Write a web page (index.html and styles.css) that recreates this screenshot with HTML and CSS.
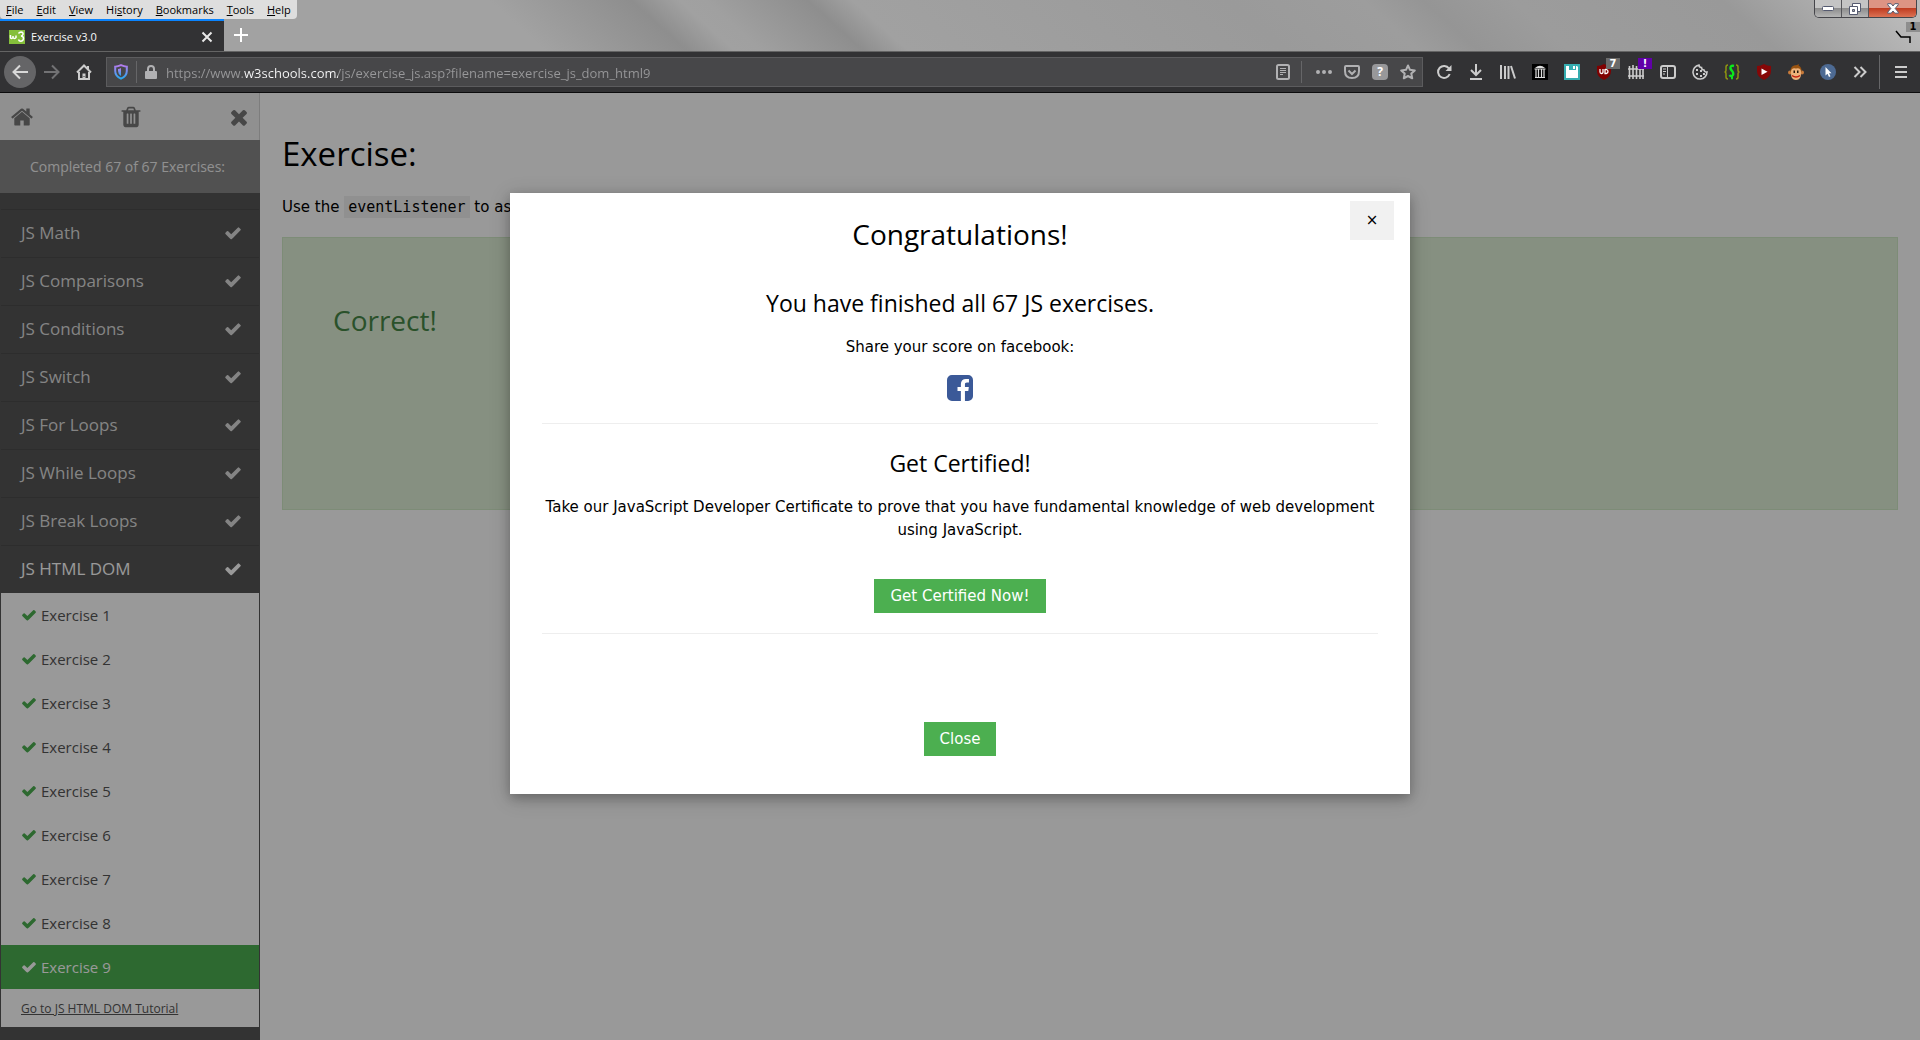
FILE: index.html
```html
<!DOCTYPE html>
<html lang="en">
<head>
<meta charset="utf-8">
<title>Exercise v3.0</title>
<link rel="stylesheet" href="styles.css">
</head>
<body>
<svg class="sprite" aria-hidden="true">
  <symbol id="check" viewBox="0 0 1792 1792"><path d="M1671 566q0 40-28 68l-724 724-136 136q-28 28-68 28t-68-28l-136-136-362-362q-28-28-28-68t28-68l136-136q28-28 68-28t68 28l294 295 656-657q28-28 68-28t68 28l136 136q28 28 28 68z"/></symbol>
</svg>

<header class="chrome">
  <div class="titlebar">
    <div class="title-left">
      <nav class="menubar" aria-label="Application menu">
        <button><u>F</u>ile</button>
        <button><u>E</u>dit</button>
        <button><u>V</u>iew</button>
        <button>Hi<u>s</u>tory</button>
        <button><u>B</u>ookmarks</button>
        <button><u>T</u>ools</button>
        <button><u>H</u>elp</button>
      </nav>
      <div class="tabs">
        <div class="tab">
          <svg width="16" height="14" viewBox="0 0 16 14"><rect width="16" height="14" fill="#85bf3b"/><path d="M1.500 5v2.500q0 1 1 1t1.500-1V6v1.500q.5 1 1.500 1t1.500-1V5.500M9.500 3.500q1-1.500 2.500-1.500 2.500.3 2 2.300-.3 1.500-2 1.700 2.500.3 2.500 2.500-.3 2.700-2.800 2.700-1.700 0-2.200-1.700" fill="none" stroke="#fff" stroke-width="1.500"/></svg>
          <span class="tab-title">Exercise v3.0</span>
          <button class="tab-close" aria-label="Close tab"><svg width="12" height="12" viewBox="0 0 12 12"><path d="M1.500 1.500l9 9m0-9l-9 9" stroke="#e8e8e8" stroke-width="2"/></svg></button>
        </div>
        <button class="new-tab" aria-label="New tab"><svg width="14" height="14" viewBox="0 0 14 14"><path d="M7 0v14M0 7h14" stroke="#fff" stroke-width="2"/></svg></button>
      </div>
    </div>
    <div class="title-right">
      <div class="window-controls">
        <button class="wc wc-min" aria-label="Minimize"><svg width="12" height="6" viewBox="0 0 12 6"><rect x=".5" y=".5" width="11" height="4" rx="1" fill="#fff" stroke="#555a70"/></svg></button>
        <button class="wc wc-max" aria-label="Restore"><svg width="12" height="12" viewBox="0 0 12 12"><path d="M3.500.5h8v8h-8z" fill="#fff" stroke="#555a70"/><path d="M.5 3.500h8v8h-8z" fill="#fff" stroke="#555a70"/><path d="M3.500 6.500h2v2h-2z" fill="#aaa" stroke="#555a70"/></svg></button>
        <button class="wc wc-close" aria-label="Close window"><svg width="12" height="11" viewBox="0 0 12 11"><path d="M.7.700h3.500L6 3 7.800.7h3.500v1L8.200 5.500l3.100 3.700v1H7.800L6 8l-1.800 2.200H.7v-1l3.100-3.700L.7 1.700z" fill="#fff" stroke="#555a70"/></svg></button>
      </div>
      <button class="all-tabs" aria-label="List all tabs"><svg width="16" height="14" viewBox="0 0 16 14"><path d="M1 1l5 6h9v6" fill="none" stroke="#000" stroke-width="1.500"/></svg><span class="tab-count">1</span></button>
    </div>
  </div>

  <div class="toolbar">
    <button class="tool back" aria-label="Back"><svg width="16" height="16" viewBox="0 0 16 16"><path d="M16 8H1.500M8 1.500L1.500 8 8 14.500" fill="none" stroke="#d8d8d8" stroke-width="2"/></svg></button>
    <button class="tool" aria-label="Forward"><svg width="16" height="16" viewBox="0 0 16 16"><path d="M0 8h14.500M8 1.500L14.500 8 8 14.500" fill="none" stroke="#727274" stroke-width="2"/></svg></button>
    <button class="tool" aria-label="Home"><svg width="16" height="16" viewBox="0 0 16 16"><path d="M1 8.500l7-7 7 7M3 8v7h10V8M12 5V2" fill="none" stroke="#ccc" stroke-width="2"/><path d="M6.500 15V9.500h3V15" fill="#ccc"/><path d="M8 12v1" stroke="#323234"/></svg></button>

    <div class="urlbar">
      <svg width="14" height="16" viewBox="0 0 14 16"><defs><linearGradient id="shield" x1="0" y1="0" x2="0" y2="1"><stop stop-color="#b57bee"/><stop offset="1" stop-color="#28a8ee"/></linearGradient></defs><path d="M7 1.200q3 1.300 5.800 1.500v4.300q0 5-5.800 7.700-5.800-2.700-5.800-7.700V2.700Q4 2.500 7 1.200z" fill="none" stroke="url(#shield)" stroke-width="2"/><path d="M7 4v8Q4 10 4 7V5q1.500-.2 3-1z" fill="url(#shield)"/></svg>
      <span class="rule"></span>
      <svg width="12" height="14" viewBox="0 0 12 14"><path d="M3 7V4q0-3 3-3t3 3v3" fill="none" stroke="#b1b1b3" stroke-width="2"/><rect y="6" width="12" height="8" rx="1" fill="#b1b1b3"/></svg>
      <input class="url" type="text" aria-label="Address" value="https://www.w3schools.com/js/exercise_js.asp?filename=exercise_js_dom_html9">
      <button class="page-act" aria-label="Reader view"><svg width="14" height="16" viewBox="0 0 14 16"><rect x="1" y="1" width="12" height="14" rx="1.500" fill="none" stroke="#b1b1b3" stroke-width="2"/><path d="M4 4.500h6M4 6.500h6M4 8.500h6M4 10.500h3" stroke="#b1b1b3"/></svg></button>
      <span class="rule actions-rule"></span>
      <button class="page-act" aria-label="Page actions"><svg width="16" height="4" viewBox="0 0 16 4"><path d="M2 0a2 2 0 100 4 2 2 0 000-4zm6 0a2 2 0 100 4 2 2 0 000-4zm6 0a2 2 0 100 4 2 2 0 000-4z" fill="#b1b1b3"/></svg></button>
      <button class="page-act" aria-label="Save to Pocket"><svg width="16" height="14" viewBox="0 0 16 14"><path d="M2 1h12q1 0 1 1v4q0 7-7 7T1 6V2q0-1 1-1z" fill="none" stroke="#b1b1b3" stroke-width="2"/><path d="M4.500 5.500L8 9l3.500-3.500" fill="none" stroke="#b1b1b3" stroke-width="2"/></svg></button>
      <button class="page-act help" aria-label="Site help">?</button>
      <button class="page-act" aria-label="Bookmark this page"><svg width="16" height="16" viewBox="0 0 16 16"><path d="M8 1.500l2 4.300 4.800.6-3.500 3.200.9 4.700L8 12l-4.200 2.300.9-4.700L1.200 6.400 6 5.800z" fill="none" stroke="#b1b1b3" stroke-width="2" stroke-linejoin="round"/></svg></button>
    </div>

    <div class="extensions">
      <button class="tool" aria-label="Reload"><svg width="16" height="16" viewBox="0 0 16 16"><path d="M13 4.500A6 6 0 1013.700 10" fill="none" stroke="#ccc" stroke-width="2"/><path d="M15.500 1v6h-6z" fill="#ccc"/></svg></button>
      <button class="tool" aria-label="Downloads"><svg width="14" height="16" viewBox="0 0 14 16"><path d="M7 0v11M2 6l5 5 5-5M1 15h12" fill="none" stroke="#ccc" stroke-width="2"/></svg></button>
      <button class="tool" aria-label="Library"><svg width="16" height="14" viewBox="0 0 16 14"><path d="M1 0v14M5 1v13M8.500 1v13M11 1l4 12.500" fill="none" stroke="#ccc" stroke-width="2"/></svg></button>
      <button class="tool" aria-label="Internet Archive"><svg width="16" height="16" viewBox="0 0 16 16"><path d="M0 0h16v16H0z" fill="#000"/><path d="M3 4q5-4.500 10 0z" fill="#ddd"/><path d="M2.500 5h11M3 13.500h10M4 5v8M6.500 5v8M9.500 5v8M12 5v8" stroke="#ddd" stroke-width="1.200"/></svg></button>
      <button class="tool" aria-label="Save page"><svg width="16" height="16" viewBox="0 0 16 16"><path d="M0 0h16v16H0z" fill="#35adb0"/><path d="M2 2h3v4h7V2h1l1 1v11H2z" fill="#fff"/><path d="M9 2h2v3H9z" fill="#fff"/></svg></button>
      <button class="tool" aria-label="uBlock Origin"><svg width="16" height="16" viewBox="0 0 16 16"><path d="M8 0q3 2 7 2v5q0 6-7 9-7-3-7-9V2q4 0 7-2z" fill="#800000"/><path d="M4 5v3q0 1.500 1.500 1.500T7 8V5M9 5v4.500h1.500Q12 9 12 7.500T10.500 5.500H9" fill="none" stroke="#fff" stroke-width="1.300"/></svg><span class="badge">7</span></button>
      <button class="tool" aria-label="Request blocker"><svg width="16" height="16" viewBox="0 0 16 16"><path d="M1.500 2v13M5 1v14M8.500 2v13M12 1v14M15 2v13M0 5h16M0 12h16" stroke="#ccc" stroke-width="1.600"/></svg><span class="badge alert">!</span></button>
      <button class="tool" aria-label="Sidebars"><svg width="16" height="14" viewBox="0 0 16 14"><rect x="1" y="1" width="14" height="12" rx="2" fill="none" stroke="#ccc" stroke-width="2"/><path d="M7.500 1v12M3 4h3M3 6.500h3M3 9h2" stroke="#ccc"/></svg></button>
      <button class="tool" aria-label="Cookies"><svg width="16" height="16" viewBox="0 0 16 16"><path d="M7 1.100A7 7 0 1015 8q-2.500.5-3-2-2.500 0-2.500-2.500Q7 3.500 7 1.100z" fill="none" stroke="#ccc" stroke-width="1.600"/><path d="M4 5h2v2H4zM8 6h2v2H8zM4 9h2v2H4zM8 11h2v2H8zM11 9h2v2h-2z" fill="#ccc"/></svg></button>
      <button class="tool" aria-label="User styles"><svg width="16" height="16" viewBox="0 0 16 16"><path d="M4 1Q2 1 2 3v3q0 2-1.500 2Q2 8 2 10v3q0 2 2 2M12 1q2 0 2 2v3q0 2 1.500 2Q14 8 14 10v3q0 2-2 2" fill="none" stroke="#8f9410" stroke-width="1.500"/><path d="M10 2Q6 1 6.500 4.500q.5 1.500 2 3Q10 10 8.500 11.500q-1.500 1.500-3-.5M7 14h2" fill="none" stroke="#0bea1c" stroke-width="2.400"/></svg></button>
      <button class="tool" aria-label="Video blocker"><svg width="16" height="16" viewBox="0 0 16 16"><path d="M8 0q3 2 7 2v5q0 6-7 9-7-3-7-9V2q4 0 7-2z" fill="#860707"/><path d="M5.500 4.500v6.500l6-3.200z" fill="#fff"/></svg></button>
      <button class="tool" aria-label="Greasemonkey"><svg width="16" height="16" viewBox="0 0 16 16"><circle cx="2" cy="8.500" r="2" fill="#c87a3a"/><circle cx="14" cy="8.500" r="2" fill="#c87a3a"/><path d="M2.500 8Q2 1 9 1l2-1-.5 1.500Q14 3 13.500 8z" fill="#9a5310"/><path d="M8 4.500q5-1 5 3.500.5 8-5 8t-5-8q0-4.500 5-3.500z" fill="#eeb37b"/><path d="M5.500 6.500h1.500v2.500H5.500zM9 6.500h1.500v2.500H9z" fill="#26180a"/><path d="M4 11.500q4 3 8 0" fill="none" stroke="#c42010" stroke-width="1.500"/></svg></button>
      <button class="tool" aria-label="Pointer tools"><svg width="16" height="16" viewBox="0 0 16 16"><circle cx="8" cy="8" r="8" fill="#4d6a93"/><path d="M5.500 3v8.500l2-1.700 1.500 3.200 1.500-.7L9 9.300h2.500z" fill="#fff"/></svg></button>
      <button class="tool" aria-label="More tools"><svg width="14" height="12" viewBox="0 0 14 12"><path d="M1.500 1l5 5-5 5M7.500 1l5 5-5 5" fill="none" stroke="#ccc" stroke-width="2"/></svg></button>
    </div>
    <span class="rule tall"></span>
    <button class="tool" aria-label="Open menu"><svg width="12" height="12" viewBox="0 0 12 12"><path d="M0 1h12M0 6h12M0 11h12" stroke="#ccc" stroke-width="2"/></svg></button>
  </div>
</header>

<div class="viewport">
  <aside class="sidebar">
    <div class="side-tools">
      <a href="#home" aria-label="Home"><svg width="24" height="24" viewBox="0 0 1792 1792"><path d="M1472 992v480q0 26-19 45t-45 19h-384v-384h-256v384h-384q-26 0-45-19t-19-45v-480q0-1 .5-3t.5-3l575-474 575 474q1 2 1 6zm223-69l-62 74q-8 9-21 11h-3q-13 0-21-7l-692-577-692 577q-12 8-24 7-13-2-21-11l-62-74q-8-10-7-23.500t11-21.500l719-599q32-26 76-26t76 26l244 204v-195q0-14 9-23t23-9h192q14 0 23 9t9 23v408l219 182q10 8 11 21.500t-7 23.500z"/></svg></a>
      <button aria-label="Reset score"><svg width="24" height="24" viewBox="0 0 1792 1792"><path d="M704 1376v-704q0-14-9-23t-23-9h-64q-14 0-23 9t-9 23v704q0 14 9 23t23 9h64q14 0 23-9t9-23zm256 0v-704q0-14-9-23t-23-9h-64q-14 0-23 9t-9 23v704q0 14 9 23t23 9h64q14 0 23-9t9-23zm256 0v-704q0-14-9-23t-23-9h-64q-14 0-23 9t-9 23v704q0 14 9 23t23 9h64q14 0 23-9t9-23zm-544-992h448l-48-117q-7-9-17-11h-317q-10 2-17 11zm928 32v64q0 14-9 23t-23 9h-96v948q0 83-47 143.500t-113 60.500h-832q-66 0-113-58.500t-47-141.500v-952h-96q-14 0-23-9t-9-23v-64q0-14 9-23t23-9h309l70-167q15-37 54-63t79-26h320q40 0 79 26t54 63l70 167h309q14 0 23 9t9 23z"/></svg></button>
      <button aria-label="Close menu"><svg width="24" height="24" viewBox="0 0 1792 1792"><path d="M1490 1322q0 40-28 68l-136 136q-28 28-68 28t-68-28l-294-294-294 294q-28 28-68 28t-68-28l-136-136q-28-28-28-68t28-68l294-294-294-294q-28-28-28-68t28-68l136-136q28-28 68-28t68 28l294 294 294-294q28-28 68-28t68 28l136 136q28 28 28 68t-28 68l-294 294 294 294q28 28 28 68z"/></svg></button>
    </div>
    <p class="progress">Completed 67 of 67 Exercises:</p>
    <nav class="topics" aria-label="Exercises">
      <button class="topic">JS Math <svg class="tick"><use href="#check"/></svg></button>
      <button class="topic">JS Comparisons <svg class="tick"><use href="#check"/></svg></button>
      <button class="topic">JS Conditions <svg class="tick"><use href="#check"/></svg></button>
      <button class="topic">JS Switch <svg class="tick"><use href="#check"/></svg></button>
      <button class="topic">JS For Loops <svg class="tick"><use href="#check"/></svg></button>
      <button class="topic">JS While Loops <svg class="tick"><use href="#check"/></svg></button>
      <button class="topic">JS Break Loops <svg class="tick"><use href="#check"/></svg></button>
      <button class="topic open">JS HTML DOM <svg class="tick"><use href="#check"/></svg></button>
      <div class="exercises">
        <a href="#e1"><svg class="mark"><use href="#check"/></svg>Exercise 1</a>
        <a href="#e2"><svg class="mark"><use href="#check"/></svg>Exercise 2</a>
        <a href="#e3"><svg class="mark"><use href="#check"/></svg>Exercise 3</a>
        <a href="#e4"><svg class="mark"><use href="#check"/></svg>Exercise 4</a>
        <a href="#e5"><svg class="mark"><use href="#check"/></svg>Exercise 5</a>
        <a href="#e6"><svg class="mark"><use href="#check"/></svg>Exercise 6</a>
        <a href="#e7"><svg class="mark"><use href="#check"/></svg>Exercise 7</a>
        <a href="#e8"><svg class="mark"><use href="#check"/></svg>Exercise 8</a>
        <a href="#e9" class="current"><svg class="mark"><use href="#check"/></svg>Exercise 9</a>
        <a href="#tutorial" class="tutorial">Go to JS HTML DOM Tutorial</a>
      </div>
    </nav>
  </aside>

  <main class="content">
    <h1>Exercise:</h1>
    <p class="task">Use the <code>eventListener</code> to assign an onclick event to the <code>&lt;button&gt;</code> element.</p>
    <section class="result"><h2>Correct!</h2></section>
  </main>

  <div class="overlay">
    <div class="modal" role="dialog" aria-labelledby="congrats">
      <button class="dismiss" aria-label="Dismiss">×</button>
      <h2 id="congrats">Congratulations!</h2>
      <h3>You have finished all 67 JS exercises.</h3>
      <p>Share your score on facebook:</p>
      <a class="share" href="#facebook" aria-label="Share on facebook"><svg width="26" height="26" viewBox="128 128 1536 1536"><path fill="#3b5998" d="M1376 128q119 0 203.500 84.500t84.500 203.500v960q0 119-84.500 203.500t-203.500 84.500h-188v-595h199l30-232h-229v-148q0-56 23.500-84t91.500-28l122-1v-207q-63-9-178-9-136 0-217.500 80t-81.500 226v171h-200v232h200v595h-532q-119 0-203.500-84.500t-84.500-203.500v-960q0-119 84.500-203.500t203.500-84.500h960z"/></svg></a>
      <hr>
      <h3>Get Certified!</h3>
      <p>Take our JavaScript Developer Certificate to prove that you have fundamental knowledge of web development using JavaScript.</p>
      <a class="button certify" href="#certificate">Get Certified Now!</a>
      <hr>
      <button class="button close">Close</button>
    </div>
  </div>
</div>
</body>
</html>
```
FILE: styles.css
```css
* { box-sizing: border-box; }

body {
  margin: 0;
  min-height: 100vh;
  display: flex;
  flex-direction: column;
  font: 15px/23px "DejaVu Sans", Verdana, sans-serif;
  color: #000;
}

button {
  margin: 0;
  padding: 0;
  border: 0;
  background: none;
  font: inherit;
  color: inherit;
}

svg { display: block; flex: none; }
.sprite { position: absolute; width: 0; height: 0; }
h1, h2, h3, p { margin: 0; }
h1, h2, h3 { font-family: "Open Sans", "Segoe UI", sans-serif; font-weight: 400; }

/* Browser chrome */
.chrome {
  font: 11px/18px "Open Sans", "Segoe UI", sans-serif;
  border-bottom: 1px solid #0c0c0d;
}

.titlebar {
  display: flex;
  justify-content: space-between;
  height: 52px;
  border-bottom: 1px solid #646464;
  background: linear-gradient(42deg, #a2a2a2 365px, #8e8e8e 460px, #a1a1a1 492px, #a0a0a0 510px, #8e8e8e 578px, #a1a1a1 608px, #9a9a9a 860px, #9d9d9d 950px, #959595 990px, #9c9c9c 1050px, #999 1190px, #bababa 1300px);
}

.title-left { display: flex; flex-direction: column; align-items: flex-start; }

.menubar {
  display: flex;
  gap: 13px;
  height: 19px;
  padding: 1px 6px 0;
  border-radius: 0 0 4px 4px;
  background: #dedede;
  color: #000;
}

.tabs { display: flex; height: 33px; }

.tab {
  display: flex;
  align-items: center;
  gap: 6px;
  width: 224px;
  padding: 2px 11px 0 9px;
  border-top: 2px solid #0a84ff;
  background: #323234;
  color: #f9f9fa;
}

.tab-title { flex: 1; }
.new-tab { width: 34px; display: grid; place-items: center; }

.title-right { display: flex; flex-direction: column; align-items: flex-end; }

.window-controls {
  display: flex;
  height: 18px;
  margin-right: 3px;
  border: 1px solid #45454a;
  border-top: 0;
  border-radius: 0 0 5px 5px;
  overflow: hidden;
}

.wc {
  display: grid;
  place-items: center;
  width: 27px;
  border-right: 1px solid #55555a;
  background: linear-gradient(#c4c4c4 50%, #8d8d8d 50%, #b5b5b5);
}

.wc-close {
  width: 47px;
  border: 0;
  background: linear-gradient(#dd9484 50%, #c03d22 50%, #dc7254);
}

.all-tabs { position: relative; padding: 12px 9px 0 0; }

.tab-count {
  position: absolute;
  top: 4px;
  right: 0;
  width: 14px;
  background: #8e8e8e;
  font: 700 10px/10px "DejaVu Sans", sans-serif;
}

.toolbar {
  display: flex;
  align-items: center;
  height: 40px;
  padding: 0 3px 0 4px;
  background: #323234;
}

.tool {
  position: relative;
  display: grid;
  place-items: center;
  flex: none;
  width: 32px;
  height: 32px;
}

.back { border-radius: 50%; background: #656567; }

.badge {
  position: absolute;
  top: 2px;
  right: 0;
  width: 14px;
  background: #6b6b6b;
  color: #fff;
  font: 700 10px/11px "DejaVu Sans", sans-serif;
}

.alert { background: #6100a8; }

.urlbar {
  flex: 1;
  display: flex;
  align-items: center;
  gap: 8px;
  height: 30px;
  margin: 0 5px 0 6px;
  padding: 0 4px 0 7px;
  border: 1px solid #5c5c5e;
  background: #474749;
}

.rule { flex: none; width: 1px; height: 22px; background: #666668; }
.actions-rule { margin-right: 4px; }
.tall { height: 34px; margin: 0 5px 0 3px; }

.url {
  flex: 1;
  min-width: 0;
  padding: 2px 0 0 1px;
  border: 0;
  outline: 0;
  font: 13px/20px "Open Sans", "Segoe UI", sans-serif;
  color: transparent;
  background: linear-gradient(90deg, #98989a 79px, #f9f9fa 79px 173px, #98989a 173px);
  -webkit-background-clip: text;
  background-clip: text;
}

.page-act { display: grid; place-items: center; width: 20px; height: 20px; }

.help { width: 16px; height: 16px; margin: 0 2px; border-radius: 4px; background: #98989a; color: #fff; font: 700 12px/16px "Open Sans", sans-serif; }

.extensions { display: flex; }

/* Page */
.viewport { position: relative; flex: 1; display: flex; background: #fff; }

.sidebar {
  flex: none;
  display: flex;
  flex-direction: column;
  width: 260px;
  font-family: "Open Sans", "Segoe UI", sans-serif;
  background: #555;
}

.side-tools {
  display: flex;
  align-items: center;
  justify-content: space-between;
  height: 47px;
  padding: 0 8px 0 10px;
  border-right: 1px solid #d0d0d0;
  background: #f1f1f1;
  fill: #777;
}

.progress {
  padding: 15px 5px 15px 0;
  background: #878787;
  color: #f1f1f1;
  font-size: 14px;
  text-align: center;
}

.topics { display: flex; flex-direction: column; padding-top: 16px; }

.topic {
  display: flex;
  align-items: center;
  justify-content: space-between;
  height: 48px;
  margin: 0 1px;
  padding: 0 17px 2px 20px;
  border-top: 1px solid #4c4c4c;
  font-size: 17px;
  color: #ddd;
}

.open { color: #fff; }
.tick { width: 18px; height: 18px; fill: currentColor; }

.exercises { display: flex; flex-direction: column; margin: 0 1px; background: #fff; }

.exercises a {
  display: flex;
  align-items: center;
  gap: 4px;
  height: 44px;
  padding: 0 20px;
  color: #555;
  text-decoration: none;
}

.mark { width: 16px; height: 16px; fill: #4caf50; }

.exercises .current { background: #4caf50; color: #fff; }
.current .mark { fill: #fff; }
.exercises .tutorial { height: 38px; font-size: 12px; text-decoration: underline; }

.content { flex: 1; min-width: 0; padding: 36px 22px; }
.content h1 { font-size: 33px; line-height: 50px; }
.task { margin: 17px 0 18px; }
.task code { padding: 2px 4px; background: #f1f1f1; font: 15px/19px "DejaVu Sans Mono", Consolas, monospace; }

.result {
  height: 273px;
  padding: 61px 50px;
  border: 1px solid #d0e9c6;
  background: #dff0d8;
  color: #468847;
}

.result h2 { font-size: 28px; line-height: 42px; }

/* Dialog */
.overlay {
  position: absolute;
  inset: 0;
  padding: 100px 16px 0;
  background: rgba(0, 0, 0, 0.4);
}

.modal {
  position: relative;
  display: flex;
  flex-direction: column;
  align-items: center;
  max-width: 900px;
  margin: 0 auto;
  padding: 20px 32px 38px;
  background: #fff;
  box-shadow: 0 4px 10px rgba(0, 0, 0, 0.2), 0 4px 20px rgba(0, 0, 0, 0.2);
  text-align: center;
}

.modal h2 { font-size: 28px; line-height: 42px; margin-bottom: 31px; }
.modal h3 { font-size: 23px; line-height: 34px; margin-bottom: 16px; }
.share { margin: 16px 0 22px; }
.modal hr { width: 100%; margin: 0; border: 0; border-top: 1px solid #eee; }
.modal hr + h3 { margin-top: 22px; }

.dismiss {
  position: absolute;
  top: 8px;
  right: 16px;
  width: 44px;
  height: 39px;
  background: #f1f1f1;
}

.button {
  padding: 6px 16px 5px;
  background: #4caf50;
  color: #fff;
  text-decoration: none;
}

.certify { margin: 37px 0 20px; }
.close { margin-top: 88px; }
```
